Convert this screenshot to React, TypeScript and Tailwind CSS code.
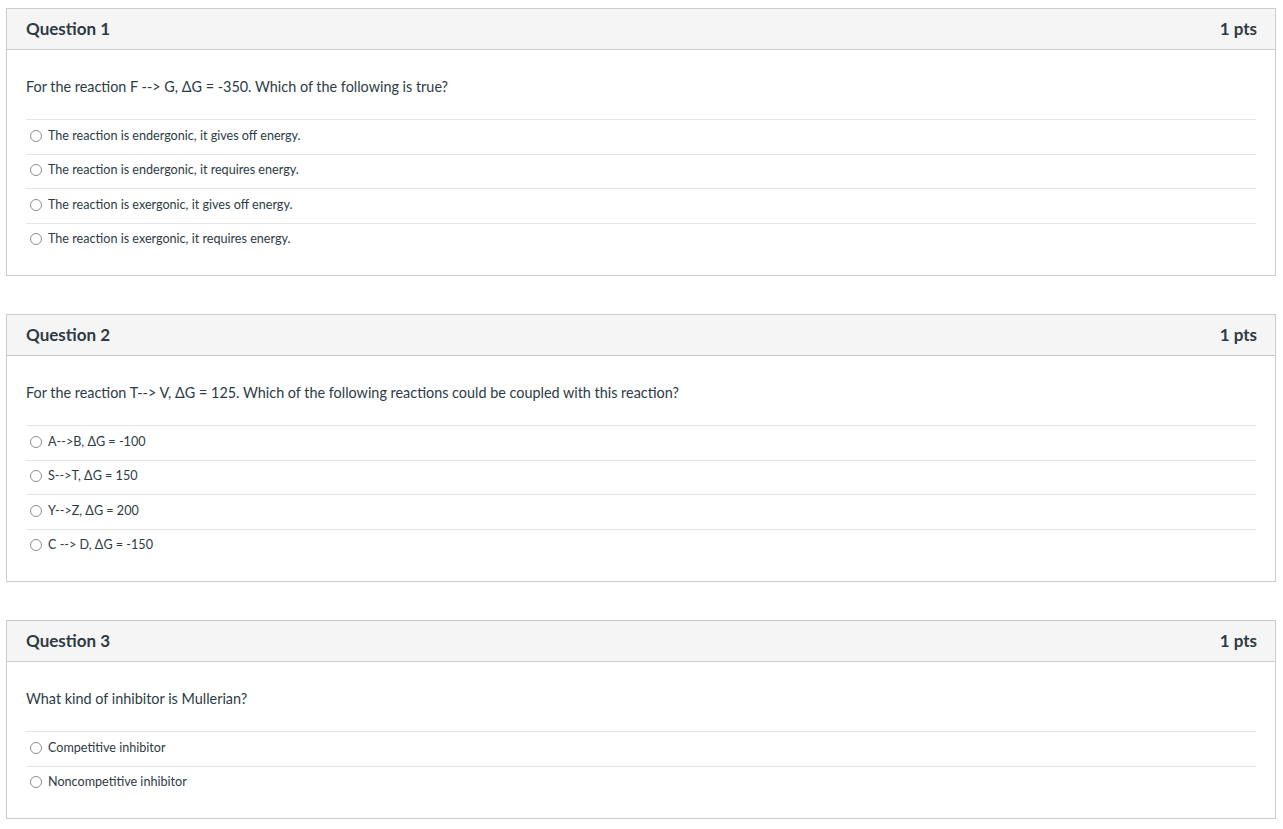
const font = { fontFamily: 'Lato, "Open Sans", "Liberation Sans", sans-serif' }

type Question = {
  title: string
  points: string
  text: string
  answers: string[]
}

const questions: Question[] = [
  {
    title: 'Question 1',
    points: '1 pts',
    text: 'For the reaction F --> G, ΔG = -350. Which of the following is true?',
    answers: [
      'The reaction is endergonic, it gives off energy.',
      'The reaction is endergonic, it requires energy.',
      'The reaction is exergonic, it gives off energy.',
      'The reaction is exergonic, it requires energy.',
    ],
  },
  {
    title: 'Question 2',
    points: '1 pts',
    text: 'For the reaction T--> V, ΔG = 125. Which of the following reactions could be coupled with this reaction?',
    answers: ['A-->B, ΔG = -100', 'S-->T, ΔG = 150', 'Y-->Z, ΔG = 200', 'C --> D, ΔG = -150'],
  },
  {
    title: 'Question 3',
    points: '1 pts',
    text: 'What kind of inhibitor is Mullerian?',
    answers: ['Competitive inhibitor', 'Noncompetitive inhibitor'],
  },
]

function QuestionCard({ q }: { q: Question }) {
  return (
    <div className="border border-[#c7cdd1] bg-white">
      {/* Header */}
      <div className="flex h-[41px] items-center justify-between border-b border-[#c7cdd1] bg-[#f5f5f5] pl-[19px] pr-[18px] pb-[1px] text-[17px] font-bold text-[#2d3b45]">
        <span>{q.title}</span>
        <span>{q.points}</span>
      </div>

      {/* Body */}
      <div className="px-[19px] pt-[27px] pb-[18px]">
        <div className="text-[14.4px] leading-[20px] text-[#2d3b45]">{q.text}</div>
        <div className="mt-[22px]">
          {q.answers.map(a => (
            <label
              key={a}
              className="flex h-[34.5px] items-center gap-[6px] border-t border-[#e5e5e5] pb-[2px] pl-[4px] text-[12.6px] leading-[16px] text-[#2d3b45]"
            >
              <span className="h-[12px] w-[12px] shrink-0 rounded-full border border-[#8f8f8f]" />
              <span>{a}</span>
            </label>
          ))}
        </div>
      </div>
    </div>
  )
}

export default function App() {
  return (
    <div className="min-h-screen bg-white pt-[8px] pl-[6px] pr-[7px]" style={font}>
      <div className="flex flex-col gap-[38px]">
        {questions.map(q => (
          <QuestionCard key={q.title} q={q} />
        ))}
      </div>
    </div>
  )
}
